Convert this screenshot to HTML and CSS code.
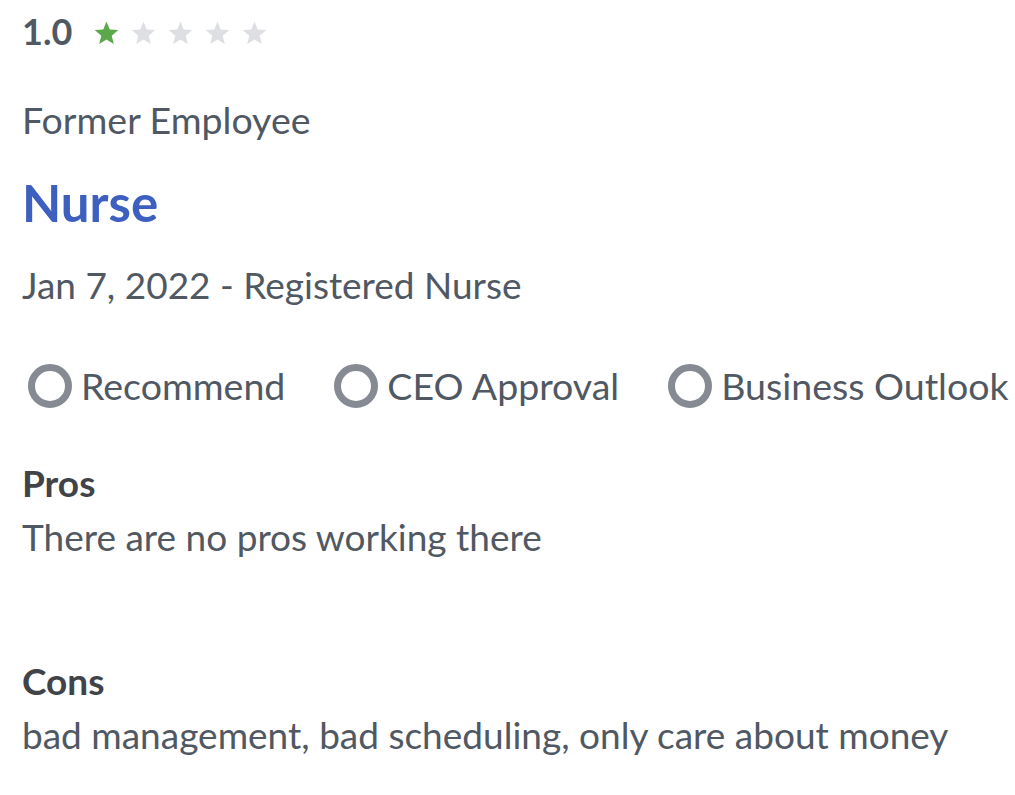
FILE: index.html
```html
<!DOCTYPE html>
<html lang="en">
<head>
<meta charset="utf-8">
<title>Review</title>
<link rel="stylesheet" href="styles.css">
</head>
<body>
<article class="review">
  <div class="rating">
    <span class="score">1.0</span>
    <span class="stars">
      <svg class="star on" viewBox="0 0 24 24"><path d="M12 1.5l3.1 7.6 8.2.6-6.3 5.3 2 8-7-4.4-7 4.4 2-8L.7 9.7l8.2-.6z"/></svg>
      <svg class="star" viewBox="0 0 24 24"><path d="M12 1.5l3.1 7.6 8.2.6-6.3 5.3 2 8-7-4.4-7 4.4 2-8L.7 9.7l8.2-.6z"/></svg>
      <svg class="star" viewBox="0 0 24 24"><path d="M12 1.5l3.1 7.6 8.2.6-6.3 5.3 2 8-7-4.4-7 4.4 2-8L.7 9.7l8.2-.6z"/></svg>
      <svg class="star" viewBox="0 0 24 24"><path d="M12 1.5l3.1 7.6 8.2.6-6.3 5.3 2 8-7-4.4-7 4.4 2-8L.7 9.7l8.2-.6z"/></svg>
      <svg class="star" viewBox="0 0 24 24"><path d="M12 1.5l3.1 7.6 8.2.6-6.3 5.3 2 8-7-4.4-7 4.4 2-8L.7 9.7l8.2-.6z"/></svg>
    </span>
  </div>
  <div class="status">Former Employee</div>
  <h2 class="title">Nurse</h2>
  <div class="meta">Jan 7, 2022 - Registered Nurse</div>
  <div class="badges">
    <span class="badge"><span class="ring"></span>Recommend</span>
    <span class="badge"><span class="ring"></span>CEO Approval</span>
    <span class="badge"><span class="ring"></span>Business Outlook</span>
  </div>
  <section class="block">
    <h3 class="label">Pros</h3>
    <p class="text">There are no pros working there</p>
  </section>
  <section class="block">
    <h3 class="label">Cons</h3>
    <p class="text">bad management, bad scheduling, only care about money</p>
  </section>
</article>
</body>
</html>
```
FILE: styles.css
```css
html, body {
  margin: 0;
  padding: 0;
  background: #ffffff;
}
body {
  font-family: Lato, "Open Sans", sans-serif;
  color: #505863;
}
.review {
  padding: 0 22px;
}
.rating {
  display: flex;
  align-items: center;
  gap: 22px;
  height: 62px;
}
.score {
  font-size: 36px;
  font-weight: 700;
  line-height: 1;
  color: #505863;
}
.stars {
  display: flex;
  gap: 12px;
  margin-top: 2px;
}
.star {
  width: 25px;
  height: 25px;
  fill: #dedfe3;
}
.star.on {
  fill: #5ba84b;
}
.status {
  font-size: 37.5px;
  line-height: 50px;
  margin-top: 33px;
}
.title {
  margin: 28px 0 0;
  font-size: 51px;
  font-weight: 700;
  line-height: 60px;
  color: #3d5fbf;
}
.meta {
  font-size: 37px;
  line-height: 50px;
  margin-top: 27px;
}
.badges {
  display: flex;
  align-items: center;
  gap: 49px;
  font-size: 37.5px;
  line-height: 50px;
  margin-top: 51px;
  margin-left: 6px;
  white-space: nowrap;
}
.badge {
  display: flex;
  align-items: center;
  gap: 9px;
  flex: none;
}
.ring {
  width: 30px;
  height: 30px;
  border: 7px solid #868a92;
  border-radius: 50%;
  flex: none;
}
.block {
  margin-top: 47px;
}
.block + .block {
  margin-top: 94px;
}
.label {
  margin: 0;
  font-size: 37px;
  font-weight: 700;
  line-height: 50px;
  color: #404348;
}
.text {
  margin: 4px 0 0;
  font-size: 37px;
  line-height: 50px;
}
```
